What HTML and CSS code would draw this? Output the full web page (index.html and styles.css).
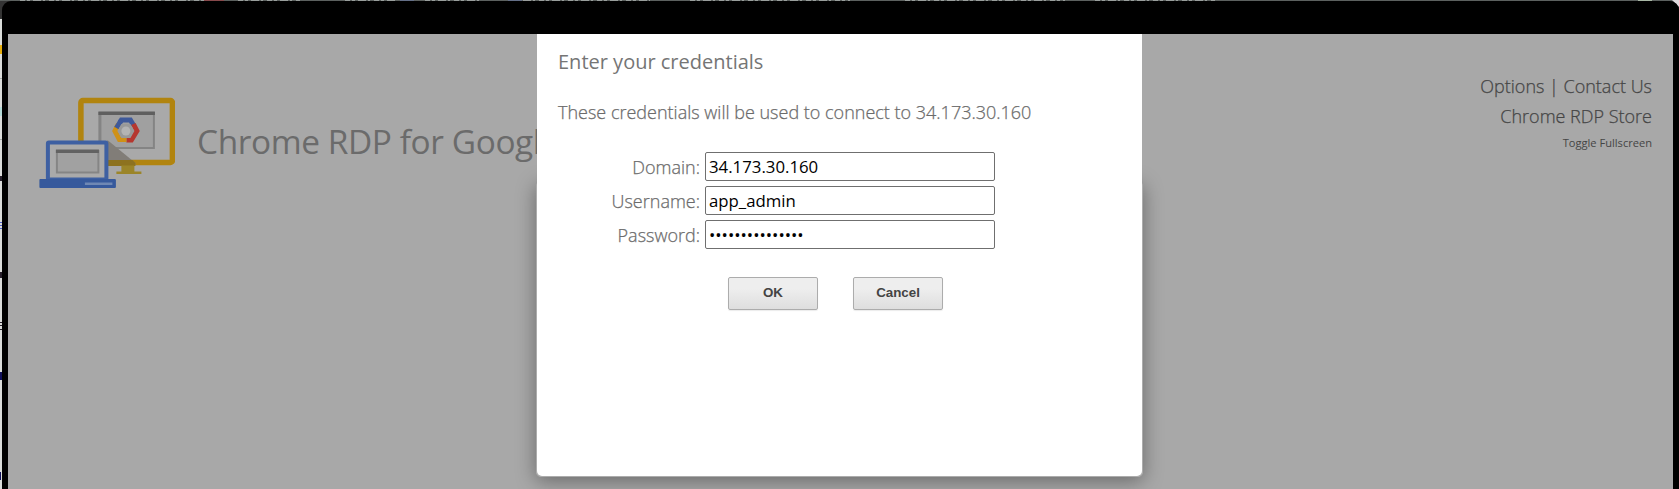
FILE: index.html
```html
<!DOCTYPE html>
<html lang="en">
<head>
<meta charset="utf-8">
<title>Chrome RDP</title>
<link rel="stylesheet" href="styles.css">
</head>
<body>
<div class="desktop">
  <svg class="backdrop" width="1679" height="489" viewBox="0 0 1679 489" aria-hidden="true">
    <rect width="1679" height="489" fill="#343434"/>
    <rect y="19" width="2" height="470" fill="#dadcda"/>
    <rect width="1679" height="1" fill="#5c615f"/>
    <path d="M20 .5H205M238 .5H300M345 .5H395M425 .5H480M510 .5H650M690 .5H850M905 .5H1065M1095 .5H1215" stroke="#999e9c" stroke-dasharray="5 2 3 3 8 2 2 4"/>
    <path d="M204 .5h20" stroke="#87494b"/>
    <path d="M400 .5h14M508 .5h14" stroke="#646f87"/>
    <path d="M1638 .5h14" stroke="#a8b7a5"/>
    <path d="M1672 0h7v7z" fill="#ded9dc"/>
    <path d="M0 45h2v9H0z" fill="#e5ad0c"/>
    <path d="M0 107h2v9H0z" fill="#b5dcd9"/>
    <path d="M0 78h2v1H0zM0 139h2v1H0z" fill="#a7a9a7"/>
    <path d="M0 176h2v5H0zM0 272h2v6H0zM0 322h2v1H0zM0 325h2v1H0zM0 329h2v1H0z" fill="#28202c"/>
    <path d="M0 222h2v1H0zM0 225h2v1H0zM0 228h2v1H0z" fill="#5364c6"/>
    <path d="M0 372h2v8H0zM0 472h1v8H0z" fill="#11115c"/>
  </svg>
  <div class="window">
    <main class="page">
      <header class="header">
        <div class="brand">
          <svg class="logo" width="136" height="92" viewBox="38.6 97 136 92" aria-hidden="true">
            <rect x="80.5" y="100.5" width="91.500" height="62" rx="2" fill="#a9a9a9" stroke="#b1840f" stroke-width="5.500"/>
            <rect x="98" y="112" width="56.500" height="37" fill="#848484"/>
            <rect x="101" y="115" width="51.500" height="32" fill="#a0a0a0"/>
            <rect x="98" y="111.500" width="56.500" height="3.500" fill="#5f5f5f"/>
            <path d="M119.500 122.500 121 120H130L133 125" fill="none" stroke="#3e599a" stroke-width="5"/>
            <path d="M133 124 136.500 131 131 140H126" fill="none" stroke="#b5372f" stroke-width="5"/>
            <path d="M118 124 114.500 131 119 139.500H126" fill="none" stroke="#cf9117" stroke-width="5"/>
            <path d="M116 128 121 120" stroke="#3e599a" stroke-width="5"/>
            <path d="m121 124h9l4 7-4 7h-9l-4-7z" fill="#999"/>
            <circle cx="125.500" cy="131" r="4.500" fill="#b4b4b4"/>
            <path d="M107 140 135 163V165H107z" fill="#817d78"/>
            <path d="M107 160H132L135 163V166H107z" fill="#8d721f"/>
            <path d="M121 165.500H134V171.500H141V174H116V171.500H121z" fill="#9b8529"/>
            <rect x="47.500" y="142.500" width="58.500" height="37" rx="1" fill="#aaa" stroke="#3e60a2" stroke-width="4"/>
            <rect x="56.500" y="151" width="41.500" height="21.500" fill="#a1a1a1" stroke="#858585" stroke-width="2"/>
            <rect x="55.500" y="149.500" width="43" height="3.500" fill="#626262"/>
            <rect x="39" y="179" width="76.500" height="9" rx="1" fill="#36599c"/>
            <rect x="84.500" y="182.500" width="27.500" height="2.500" fill="#6f88b4"/>
          </svg>
          <h1 class="product">Chrome RDP for Googl</h1>
        </div>
        <nav class="links">
          <div class="link-row"><a>Options</a> | <a>Contact Us</a></div>
          <div class="link-row"><a>Chrome RDP Store</a></div>
          <a class="toggle">Toggle Fullscreen</a>
        </nav>
      </header>
      <div class="shadow-box"></div>
      <section class="dialog">
        <h2 class="dialog-title">Enter your credentials</h2>
        <p class="intro">These credentials will be used to connect to 34.173.30.160</p>
        <form class="fields">
          <label class="label" for="domain">Domain:</label><input class="input" id="domain" value="34.173.30.160">
          <label class="label" for="username">Username:</label><input class="input" id="username" value="app_admin">
          <label class="label" for="password">Password:</label><input class="input" id="password" type="password" value="aaaaaaaaaaaaaaa">
        </form>
        <div class="actions">
          <button class="button">OK</button>
          <button class="button">Cancel</button>
        </div>
      </section>
    </main>
  </div>
</div>
</body>
</html>
```
FILE: styles.css
```css
* { box-sizing: border-box; }
body { margin: 0; overflow: hidden; font-family: "Open Sans", sans-serif; }
.desktop { position: relative; width: 1679px; height: 489px; padding: 1px 0 0 2px; overflow: hidden; }
.backdrop { position: absolute; top: 0; left: 0; }
.window { position: relative; height: 488px; padding: 33px 6px 0; background: #000; border-radius: 9px 9px 0 0; }
.page { position: relative; height: 455px; overflow: hidden; background: #a8a8a8; }
.header { display: flex; justify-content: space-between; padding: 37px 21px 0 31px; }
.brand { display: flex; width: 510px; padding-top: 26px; }
.logo { flex: none; }
.product { margin: 16px 0 0 22px; font-size: 33.4px; line-height: 56px; letter-spacing: -.4px; font-weight: 400; color: #6b6b6b; white-space: nowrap; }
.links { text-align: right; color: #454545; white-space: nowrap; }
.link-row { font-size: 18px; line-height: 30px; font-weight: 300; -webkit-text-stroke: .25px #454545; }
.toggle { display: block; font-size: 11.1px; line-height: 24px; }
.shadow-box { position: absolute; left: 528px; top: 147px; width: 607px; height: 296px; border: 1px solid #acacac; border-radius: 5px; box-shadow: 0 4px 20px rgba(0, 0, 0, .38); }
.dialog { position: absolute; left: 529px; top: 0; width: 605px; height: 442px; padding: 13px 21px; background: #fff; border-radius: 0 0 5px 5px; color: #757575; }
.dialog-title { margin: 0; font-size: 20px; line-height: 30px; font-weight: 400; }
.intro { margin: 20px 0 0; font-size: 18px; line-height: 30px; }
.intro, .label { font-weight: 300; color: #6b6b6b; -webkit-text-stroke: .25px #6b6b6b; }
.fields { display: grid; grid-template-columns: 142px 290px; column-gap: 5px; row-gap: 5px; margin-top: 25px; }
.label { text-align: right; font-size: 18px; line-height: 30px; height: 29px; }
.input { height: 29px; border: 1px solid #6f6f6f; border-radius: 2px; padding: 0 3px; font: 16.8px "Open Sans", sans-serif; color: #000; outline: 0; }
.actions { display: flex; gap: 35px; margin: 28px 0 0 170px; }
.button { width: 90px; height: 33px; padding: 0 0 3px; border: 1px solid #acacac; border-radius: 2px; background: linear-gradient(#eee 35%, #dedede); box-shadow: 0 1px 1px rgba(0, 0, 0, .08); font: bold 13.33px "Liberation Sans", sans-serif; color: #444; }
```
